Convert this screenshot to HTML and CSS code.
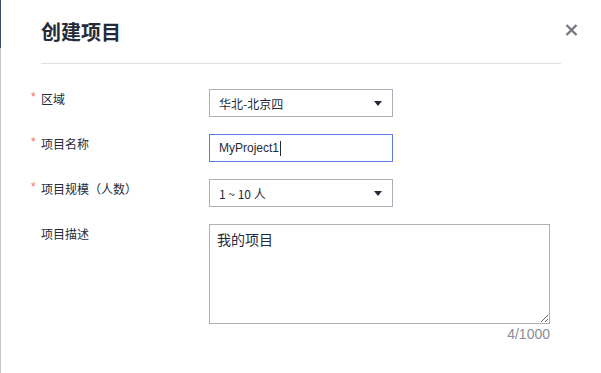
FILE: index.html
```html
<!DOCTYPE html>
<html lang="zh-CN">
<head>
<meta charset="utf-8">
<title>创建项目</title>
<link rel="stylesheet" href="styles.css">
</head>
<body>
<div class="screen">
  <div class="edge"><div class="edge-top"></div></div>
  <div class="dialog">
    <header class="dlg-head">
      <h1 class="dlg-title">创建项目</h1>
      <button class="close" type="button" aria-label="关闭">
        <svg width="13" height="12" viewBox="0 0 13 12"><path d="M1.5 1 L11.5 11 M11.5 1 L1.5 11" stroke="#75787f" stroke-width="2.4" stroke-linecap="butt"/></svg>
      </button>
    </header>
    <form class="form">
      <div class="row">
        <label class="lbl req">区域</label>
        <div class="ctrl"><div class="select"><span>华北-北京四</span><span class="caret"></span></div></div>
      </div>
      <div class="row">
        <label class="lbl req">项目名称</label>
        <div class="ctrl"><div class="input focused"><span>MyProject1</span><span class="cursor"></span></div></div>
      </div>
      <div class="row">
        <label class="lbl req">项目规模（人数）</label>
        <div class="ctrl"><div class="select"><span>1 ~ 10 人</span><span class="caret"></span></div></div>
      </div>
      <div class="row">
        <label class="lbl">项目描述</label>
        <div class="ctrl ctrl-wide">
          <textarea class="textarea">我的项目</textarea>
          <div class="counter">4/1000</div>
        </div>
      </div>
    </form>
  </div>
</div>
</body>
</html>
```
FILE: styles.css
```css
* { box-sizing: border-box; }
html, body {
  margin: 0;
  padding: 0;
  background: #ffffff;
  width: 601px;
  height: 373px;
  overflow: hidden;
}
body {
  font-family: "Noto Sans CJK SC", "Liberation Sans", sans-serif;
  color: #252b3a;
}
.screen {
  display: flex;
  height: 373px;
}
.edge {
  width: 1px;
  flex: none;
  background: #c3c6cd;
}
.edge-top {
  height: 48px;
  background: #3d4a6a;
}
.dialog {
  flex: 1;
  padding: 0 40px 0 40px;
  position: relative;
}
.dlg-head {
  padding: 18px 0 17px;
  border-bottom: 1px solid #dfe1e6;
}
.dlg-title {
  margin: 0;
  font-size: 20px;
  line-height: 28px;
  font-weight: 700;
  color: #252b3a;
}
.close {
  position: absolute;
  top: 24px;
  right: 23px;
  padding: 0;
  border: 0;
  background: transparent;
  width: 13px;
  height: 12px;
  display: block;
}
.close svg { display: block; }
.form {
  padding-top: 25px;
}
.row {
  display: flex;
  align-items: flex-start;
  margin-bottom: 17px;
}
.lbl {
  position: relative;
  width: 168px;
  flex: none;
  font-size: 12px;
  line-height: 20px;
  color: #252b3a;
}
.req::before {
  content: "*";
  position: absolute;
  left: -10px;
  top: 1px;
  font-family: "Liberation Sans", sans-serif;
  font-size: 12px;
  line-height: 14px;
  color: #f66f6a;
}
.ctrl {
  width: 184px;
}
.ctrl-wide {
  width: 341px;
}
.select, .input {
  height: 28px;
  border: 1px solid #adb0b8;
  display: flex;
  align-items: center;
  padding: 0 10px 0 9px;
  font-family: "Liberation Sans", "Noto Sans CJK SC", sans-serif;
  font-size: 12px;
  color: #252b3a;
}
.select span:first-child {
  font-family: "Noto Sans CJK SC", "Liberation Sans", sans-serif;
}
.select {
  justify-content: space-between;
}
.input.focused {
  border-color: #5e7ce0;
}
.caret {
  width: 0;
  height: 0;
  border-left: 4px solid transparent;
  border-right: 4px solid transparent;
  border-top: 5px solid #252b3a;
  margin-top: 1px;
}
.cursor {
  width: 1px;
  height: 15px;
  background: #252b3a;
  margin-left: 1px;
}
.textarea {
  display: block;
  width: 341px;
  height: 100px;
  margin: 0;
  border: 1px solid #adb0b8;
  border-radius: 0;
  padding: 4px 7px;
  font-family: "Noto Sans CJK SC", "Liberation Sans", sans-serif;
  font-size: 14px;
  line-height: 20px;
  color: #252b3a;
  outline: none;
  resize: vertical;
}
.counter {
  text-align: right;
  font-family: "Liberation Sans", sans-serif;
  font-size: 14px;
  line-height: 20px;
  color: #8a8e99;
}
```
